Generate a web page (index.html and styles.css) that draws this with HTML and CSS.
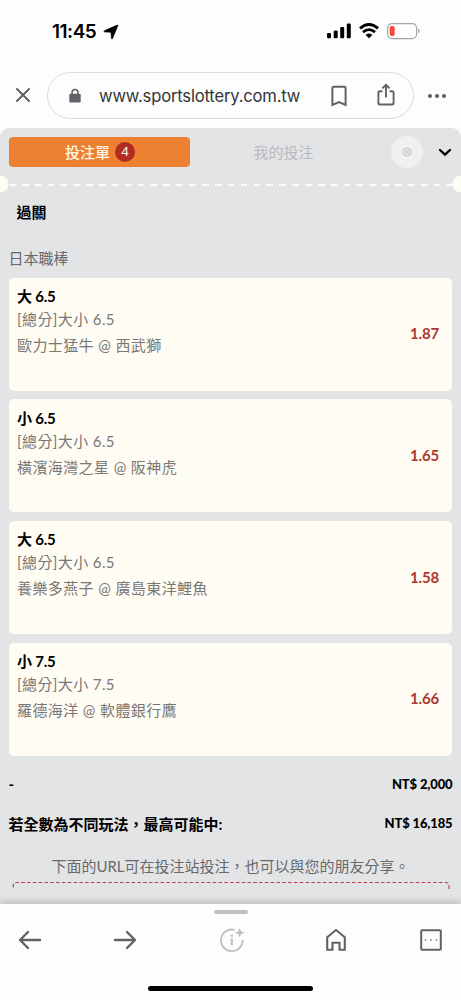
FILE: index.html
```html
<!DOCTYPE html>
<html lang="zh-Hant">
<head>
<meta charset="utf-8">
<meta name="viewport" content="width=device-width, initial-scale=1">
<title>投注單</title>
<link rel="stylesheet" href="styles.css">
</head>
<body>
<div class="phone">
  <header class="status">
    <div class="clock"><span class="time">11:45</span>
      <svg width="16" height="16" viewBox="0 0 16 16"><path d="M14.4 1.1 1.4 6.8q-1 .6 0 1l6.6.4.5 6.2q.4 1 1 0L14.8 1.5q.1-.6-.4-.4Z" stroke="#000" stroke-width=".8" stroke-linejoin="round"/></svg>
    </div>
    <svg class="signals" width="96" height="18" viewBox="0 0 96 18">
      <rect x="1" y="11" width="4" height="5.3" rx="1.2"/><rect x="7.7" y="8.5" width="4" height="7.8" rx="1.2"/><rect x="14.2" y="5" width="4" height="11.3" rx="1.2"/><rect x="20.8" y="1.5" width="4" height="14.8" rx="1.2"/>
      <path d="M34 6.4Q43 -1.4 52 6.4" fill="none" stroke="#000" stroke-width="2.9"/>
      <path d="M37 10.1Q43 5.2 49 10.1" fill="none" stroke="#000" stroke-width="2.8"/>
      <path d="M39.6 12.9Q43 10.2 46.4 12.9L43 16.3Z"/>
      <rect x="61.6" y="1.6" width="29" height="15" rx="4.5" fill="none" stroke="#a5a5a5" stroke-width="1.2"/>
      <rect x="63.7" y="4" width="5" height="10" rx="2" fill="#f8483b"/>
      <path d="M92.2 6.6q2.8 2.2 0 4.8Z" fill="#999"/>
    </svg>
  </header>
  <div class="address-row">
    <svg class="close" width="16" height="16" viewBox="0 0 16 16"><path d="m2 2 12 12M14 2 2 14" stroke="#5f6368" stroke-width="2" stroke-linecap="round"/></svg>
    <div class="address">
      <svg width="14" height="16" viewBox="0 0 14 16"><path d="M4 6V4.5a3 3 0 0 1 6 0V6" fill="none" stroke="#5f6368" stroke-width="1.5"/><rect x="1.3" y="5.8" width="11.4" height="8.7" rx="1.3" fill="#5f6368"/></svg>
      <span class="url">www.sportslottery.com.tw</span>
      <svg class="bookmark" width="18" height="22" viewBox="0 0 18 22"><path d="M2.4 20V3q0-1.2 1.2-1.2h10.8q1.2 0 1.2 1.2v17L9 17.2Z" fill="none" stroke="#5f6368" stroke-width="2"/></svg>
      <svg class="share" width="18" height="24" viewBox="0 0 18 24"><path d="M5.5 8.3H3Q1.4 8.3 1.4 10v9.8q0 1.7 1.6 1.7h12q1.6 0 1.6-1.7V10q0-1.7-1.6-1.7h-2.5M9 14.4V2M5.3 5.4 9 1.8l3.7 3.6" fill="none" stroke="#5f6368" stroke-width="1.9"/></svg>
    </div>
    <svg class="more" width="20" height="6" viewBox="0 0 20 6"><g fill="#5f6368"><circle cx="3" cy="3" r="2.1"/><circle cx="10" cy="3" r="2.1"/><circle cx="17" cy="3" r="2.1"/></g></svg>
  </div>
  <main class="slip">
    <nav class="tabs">
      <div class="tab active"><span class="label">投注單</span><span class="count">4</span></div>
      <div class="tab"><span class="label">我的投注</span></div>
      <div class="settings"><svg width="10" height="10" viewBox="0 0 10 10" fill="none" stroke="#aaa" stroke-width=".8"><path d="m5 .7 1.2.9 1.8.4.4 1.8.9 1.2-.9 1.2L8 8l-1.8.4-1.2.9-1.2-.9L2 8l-.4-1.8L.7 5l.9-1.2L2 2l1.8-.4Z"/><rect x="3.7" y="3.7" width="2.6" height="2.6" rx=".7"/></svg></div>
      <svg class="chevron" width="14" height="9" viewBox="0 0 14 9"><path d="m2 2 5 4.7L12 2" fill="none" stroke="#000" stroke-width="2.3" stroke-linecap="round"/></svg>
    </nav>
    <div class="perforation"></div>
    <h1>過關</h1>
    <h2>日本職棒</h2>
    <section class="bets">
      <article class="bet"><div><h3>大 6.5</h3><p class="market">[總分]大小 6.5</p><p class="teams">歐力士猛牛 @ 西武獅</p></div><b class="odds">1.87</b></article>
      <article class="bet"><div><h3>小 6.5</h3><p class="market">[總分]大小 6.5</p><p class="teams">橫濱海灣之星 @ 阪神虎</p></div><b class="odds">1.65</b></article>
      <article class="bet"><div><h3>大 6.5</h3><p class="market">[總分]大小 6.5</p><p class="teams">養樂多燕子 @ 廣島東洋鯉魚</p></div><b class="odds">1.58</b></article>
      <article class="bet"><div><h3>小 7.5</h3><p class="market">[總分]大小 7.5</p><p class="teams">羅德海洋 @ 軟體銀行鷹</p></div><b class="odds">1.66</b></article>
    </section>
    <div class="total stake"><span>-</span><b>NT$ 2,000</b></div>
    <div class="total"><span>若全數為不同玩法，最高可能中:</span><b>NT$ 16,185</b></div>
    <p class="share-note">下面的URL可在投注站投注，也可以與您的朋友分享。</p>
    <svg class="url-box" width="438" height="12" viewBox="0 0 438 12"><path d="M1.3 6.5V4.5Q1.3 1.5 5 1.5H434Q437 1.5 437 5V10" fill="none" stroke="#b8444a" stroke-width="1.2" stroke-dasharray="3.6 2.2"/></svg>
  </main>
  <footer class="toolbar">
    <div class="grip"></div>
    <div class="actions">
      <svg width="24" height="20" viewBox="0 0 24 20"><path d="M22 10H2.2M10 2 2 10l8 8" fill="none" stroke="#5f6368" stroke-width="2.4" stroke-linecap="round" stroke-linejoin="round"/></svg>
      <svg class="forward" width="24" height="20" viewBox="0 0 24 20"><path d="M2 10h19.8M14 2l8 8-8 8" fill="none" stroke="#5f6368" stroke-width="2.4" stroke-linecap="round" stroke-linejoin="round"/></svg>
      <svg class="info" width="28" height="26" viewBox="0 0 28 26"><path d="M16.5 2.9A10.8 10.8 0 1 0 24.6 13" fill="none" stroke="#bdc1c6" stroke-width="1.9"/><path d="M13.8 11.5v7M13.8 7.5v2.2" stroke="#bdc1c6" stroke-width="2.2"/><path d="m21.7 .8 1.4 3.5 3.6 1.4-3.6 1.4-1.4 3.5-1.4-3.5-3.6-1.4 3.6-1.4Z" fill="#bdc1c6"/></svg>
      <svg class="home" width="22" height="24" viewBox="0 0 22 24"><path d="M2.2 21.7V9.3L11 2l8.8 7.3v12.4h-5.3v-6.9h-7v6.9Z" fill="none" stroke="#5f6368" stroke-width="2.1"/></svg>
      <svg class="pages" width="24" height="24" viewBox="0 0 24 24"><rect x="2.2" y="2.2" width="19.6" height="19.6" rx="1" fill="none" stroke="#5f6368" stroke-width="2"/><g fill="#777"><rect x="5.8" y="11.3" width="1.5" height="1.5"/><rect x="11.3" y="11.3" width="1.5" height="1.5"/><rect x="16.8" y="11.3" width="1.5" height="1.5"/></g></svg>
    </div>
    <div class="home-bar"></div>
  </footer>
</div>
</body>
</html>
```
FILE: styles.css
```css
* { box-sizing: border-box; }
body, h1, h2, h3, p { margin: 0; }
svg { display: block; flex: none; }
body { background: #fdfdfd; }
.phone {
  width: 461px; height: 1000px; overflow: hidden;
  display: flex; flex-direction: column;
  font-family: Lato, "Noto Sans CJK TC", sans-serif;
}
.status { height: 72px; padding: 22px 39px 0 52px; display: flex; justify-content: space-between; }
.clock { display: flex; gap: 7px; height: 19px; align-items: center; }
.time { font: 600 19px/19px Inter, sans-serif; letter-spacing: -.5px; }
.address-row { height: 56px; display: flex; align-items: flex-start; }
.close { margin: 15px 16px 0 15px; }
.address {
  width: 367px; height: 47px; border: 1px solid #dadce0; border-radius: 24px;
  display: flex; align-items: center; padding-left: 20px;
}
.url { width: 231px; margin-left: 17px; font: 16.6px/24px Inter, sans-serif; letter-spacing: -.18px; color: #333538; white-space: nowrap; }
.share { margin-left: 29px; margin-top: -2px; }
.more { margin: 21px 0 0 13px; }
.slip {
  height: 776px; flex: none; padding: 9px 8.5px 0; overflow: hidden;
  background: #e3e4e6; border-radius: 9px 9px 0 0;
}
.tabs { height: 30px; display: flex; align-items: center; }
.tab {
  width: 181px; height: 30px; display: flex; align-items: center; justify-content: center; gap: 5px;
  font-size: 15px; color: #b8babb;
}
.tab + .tab { width: 188px; }
.label { padding-bottom: 2px; }
.tab.active { padding-left: 2px; background: #ed8131; border-radius: 4px; color: #fff8e8; font-weight: 500; }
.count { width: 20px; height: 20px; border-radius: 50%; background: #b12b22; font: 13px/19px "Noto Sans", sans-serif; text-align: center; color: #fff; }
.settings { width: 32px; height: 32px; margin-left: 13px; border-radius: 50%; background: #f0f0f1; display: grid; place-items: center; flex: none; }
.chevron { margin-left: 15px; }
.perforation {
  height: 18px; margin: 8px -8.5px 0;
  background:
    radial-gradient(circle at 0 50%, #fffcf3 8px, transparent 8.7px),
    radial-gradient(circle at 100% 50%, #fffcf3 8px, transparent 8.7px),
    repeating-linear-gradient(90deg, #fffcf3 0 6.7px, transparent 6.7px 12.87px) 8.5px 9px / 100% 2px no-repeat;
}
h1 { padding-left: 8px; margin-top: 8px; font-size: 15px; line-height: 22px; font-weight: 700; }
h2 { margin-top: 23.5px; height: 31px; font-size: 15px; line-height: 22px; font-weight: 400; color: #67686a; }
.bets { display: grid; gap: 8.7px; }
.bet {
  width: 443.5px; height: 113px; padding: 7.5px 13px 0 8.5px; background: #fffcf4; border-radius: 5px;
  display: flex; justify-content: space-between; white-space: nowrap;
}
h3 { font-size: 15px; line-height: 22px; font-weight: 700; letter-spacing: -.2px; }
.market, .teams { font-size: 15px; color: #797875; letter-spacing: .4px; }
.market { line-height: 24px; }
.teams { line-height: 28px; }
.odds { align-self: center; margin-top: -9px; font-size: 15px; line-height: 20px; letter-spacing: -.15px; color: #b0372f; }
.total { display: flex; justify-content: space-between; height: 39px; align-items: center; font-size: 15px; font-weight: 700; white-space: nowrap; }
.total b { font-size: 13px; letter-spacing: -.13px; }
.stake { margin-top: 9px; }
.share-note { margin-top: 11.5px; font-size: 15px; line-height: 24px; text-align: center; color: #68696b; white-space: nowrap; }
.url-box { margin: 3px 0 0 3px; }
.toolbar {
  height: 96px; position: relative; flex: none; background: #fdfdfd;
  box-shadow: 0 -2px 8px #0003; display: flex; flex-direction: column; align-items: center;
}
.grip { width: 34px; height: 4px; margin-top: 6px; border-radius: 2px; background: #bdc1c6; }
.actions { width: 461px; height: 52px; padding-left: 18px; display: flex; align-items: center; }
.forward { margin-left: 71px; }
.info { margin-left: 81px; }
.home { margin-left: 79px; }
.pages { margin-left: 72px; }
.home-bar { width: 165px; height: 5px; margin-top: 20px; border-radius: 3px; background: #000; }
```
